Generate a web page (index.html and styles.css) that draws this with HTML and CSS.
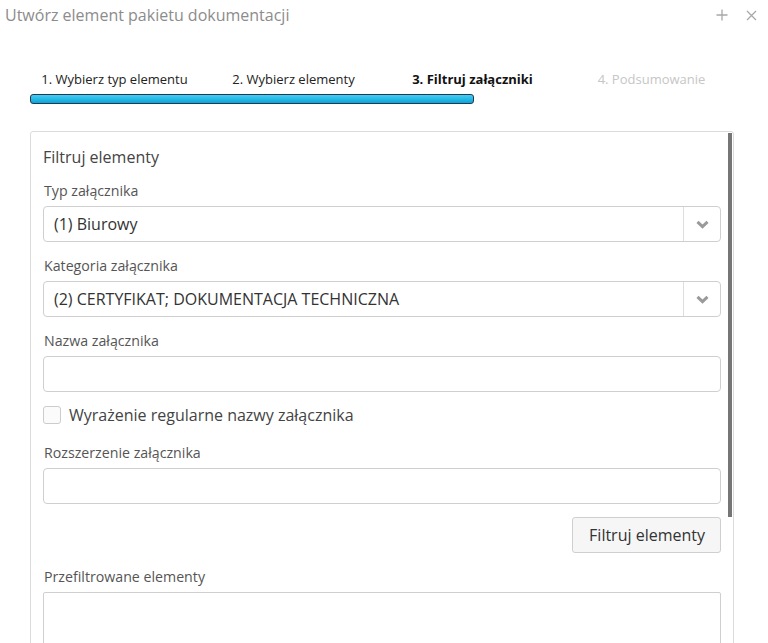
FILE: index.html
```html
<!DOCTYPE html>
<html lang="pl">
<head>
<meta charset="utf-8">
<title>Utwórz element pakietu dokumentacji</title>
<link rel="stylesheet" href="styles.css">
</head>
<body>
<div class="dialog">
  <header class="dlg-header">
    <div class="dlg-title">Utwórz element pakietu dokumentacji</div>
    <div class="dlg-tools">
      <svg class="tool" width="12" height="12" viewBox="0 0 12 12"><path d="M6 0.5V11.5M0.5 6H11.5" stroke="#a8a8a8" stroke-width="1.3" fill="none"/></svg>
      <svg class="tool" width="11" height="11" viewBox="0 0 11 11"><path d="M1 1L10 10M10 1L1 10" stroke="#a8a8a8" stroke-width="1.3" fill="none"/></svg>
    </div>
  </header>

  <div class="steps">
    <div class="step">1. Wybierz typ elementu</div>
    <div class="step">2. Wybierz elementy</div>
    <div class="step step-active">3. Filtruj załączniki</div>
    <div class="step step-future">4. Podsumowanie</div>
  </div>
  <div class="progress"></div>

  <section class="panel">
    <div class="scrollbar"></div>
    <h2 class="panel-title">Filtruj elementy</h2>

    <div class="field-label">Typ załącznika</div>
    <div class="select">
      <div class="select-value">(1) Biurowy</div>
      <div class="select-arrow"><svg width="13" height="9" viewBox="0 0 13 9"><path d="M1.5 1.8L6.5 6.6L11.5 1.8" stroke="#9a9a9a" stroke-width="3" fill="none"/></svg></div>
    </div>

    <div class="field-label">Kategoria załącznika</div>
    <div class="select">
      <div class="select-value">(2) CERTYFIKAT; DOKUMENTACJA TECHNICZNA</div>
      <div class="select-arrow"><svg width="13" height="9" viewBox="0 0 13 9"><path d="M1.5 1.8L6.5 6.6L11.5 1.8" stroke="#9a9a9a" stroke-width="3" fill="none"/></svg></div>
    </div>

    <div class="field-label">Nazwa załącznika</div>
    <div class="input"></div>

    <label class="check-row">
      <span class="checkbox"></span>
      <span class="check-text">Wyrażenie regularne nazwy załącznika</span>
    </label>

    <div class="field-label label-after-check">Rozszerzenie załącznika</div>
    <div class="input"></div>

    <div class="actions">
      <button class="btn">Filtruj elementy</button>
    </div>

    <div class="field-label">Przefiltrowane elementy</div>
    <div class="list-box"></div>
  </section>
</div>
</body>
</html>
```

FILE: styles.css
```css
* { box-sizing: border-box; }
html, body {
  margin: 0;
  padding: 0;
  background: #ffffff;
  overflow: hidden;
  height: 643px;
}
body {
  font-family: "Open Sans", "Noto Sans", sans-serif;
  color: #333;
}
.dialog {
  width: 768px;
}
.dlg-header {
  display: flex;
  align-items: center;
  justify-content: space-between;
  height: 30px;
  padding: 0 11px 0 5px;
}
.dlg-title {
  font-size: 16px;
  color: #8c8c8c;
  line-height: 30px;
}
.dlg-tools {
  display: flex;
  gap: 18px;
  align-items: center;
}
.tool { display: block; }

.steps {
  display: grid;
  grid-template-columns: repeat(4, 179px);
  margin: 40px 0 0 25px;
  font-size: 13px;
  line-height: 18px;
}
.step {
  text-align: center;
  color: #222;
}
.step-active {
  font-weight: 700;
  color: #111;
}
.step-future {
  color: #c6c6c6;
}
.progress {
  margin: 6px 0 0 30px;
  width: 444px;
  height: 10px;
  border: 1px solid #26384b;
  border-radius: 3px;
  background: linear-gradient(#44cdf3, #0aa5da);
}

.panel {
  position: relative;
  margin: 27px 0 0 30px;
  width: 704px;
  height: 600px;
  border: 1px solid #dcdcdc;
  border-radius: 3px;
  padding: 15px 12px 0 12px;
}
.scrollbar {
  position: absolute;
  top: 1px;
  right: 1px;
  width: 4px;
  height: 384px;
  background: #767676;
}
.panel-title {
  margin: 0;
  font-size: 16px;
  font-weight: 400;
  line-height: 20px;
  color: #444;
}
.field-label {
  margin-top: 14px;
  font-size: 14.2px;
  line-height: 20px;
  color: #555;
  margin-bottom: 5px;
  padding-left: 1px;
}
.select {
  display: flex;
  height: 36px;
  border: 1px solid #cfcfcf;
  border-radius: 4px;
}
.select-value {
  flex: 1;
  padding-left: 10px;
  font-size: 16px;
  line-height: 34px;
  color: #333;
}
.select-arrow {
  width: 37px;
  border-left: 1px solid #dedede;
  display: flex;
  align-items: center;
  justify-content: center;
}
.select-arrow svg { display: block; }
.input {
  height: 36px;
  border: 1px solid #cfcfcf;
  border-radius: 4px;
}
.check-row {
  display: flex;
  align-items: center;
  gap: 8px;
  margin-top: 13px;
  height: 20px;
}
.checkbox {
  width: 18px;
  height: 18px;
  border: 1px solid #cccccc;
  border-radius: 3px;
  background: #fbfbfb;
}
.check-text {
  font-size: 16px;
  line-height: 20px;
  color: #444;
}
.label-after-check {
  margin-top: 18px;
}
.actions {
  display: flex;
  justify-content: flex-end;
  margin-top: 13px;
}
.btn {
  height: 36px;
  padding: 0 15px 0 16px;
  font-family: inherit;
  font-size: 16px;
  color: #333;
  background: #f6f6f6;
  border: 1px solid #cfcfcf;
  border-radius: 3px;
}
.list-box {
  height: 120px;
  border: 1px solid #cfcfcf;
  border-radius: 2px;
  margin-top: 3px;
}
```
